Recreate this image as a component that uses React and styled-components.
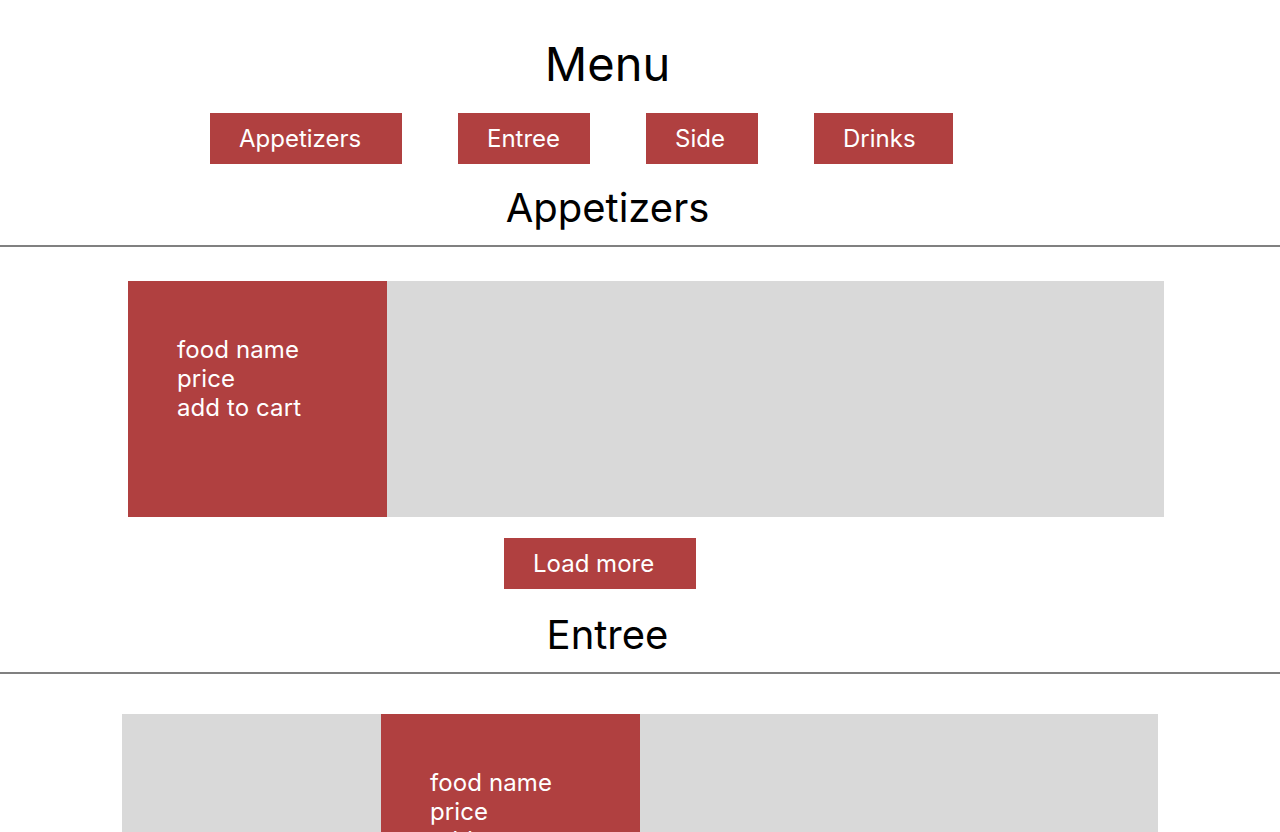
import styled, { createGlobalStyle } from 'styled-components';

const GlobalStyle = createGlobalStyle`
    body {
        margin: 0;
        font-family: Inter, "Noto Sans", sans-serif;
        background: #fff;
        color: #000;
        overflow: hidden;
    }
`

const Page = styled.div`
    width: 1280px;
    height: 832px;
    overflow: hidden;
`

const Title = styled.h1`
    margin: 0;
    padding-top: 35px;
    width: 1215px;
    height: 57px;
    text-align: center;
    font-size: 47px;
    font-weight: 400;
    line-height: 57px;
`

const Nav = styled.div`
    display: flex;
    gap: 56px;
    margin-top: 21px;
    padding-left: 210px;
`

const RedButton = styled.button`
    width: ${props => props.$w}px;
    height: 51px;
    padding: 0 0 0 29px;
    border: none;
    background: #b04040;
    color: #fff;
    font-family: inherit;
    font-size: 24px;
    line-height: 29px;
    text-align: left;
    cursor: pointer;
`

const SectionTitle = styled.h2`
    margin: ${props => props.$top}px 0 0;
    width: 1215px;
    text-align: center;
    font-size: 40px;
    font-weight: 400;
    line-height: normal;
`

const Divider = styled.hr`
    margin: ${props => props.$top}px 0 0;
    border: none;
    height: 2px;
    background: #808080;
`

const Row = styled.div`
    display: grid;
    grid-template-columns: repeat(4, 259px);
    width: 1036px;
    height: 236px;
    margin: ${props => props.$top}px 0 0 ${props => props.$left}px;
    background: #d9d9d9;
`

const Cell = styled.div`
    background: ${props => props.$active ? '#b04040' : '#d9d9d9'};
    color: #fff;
    padding: 54px 49px 0;
    font-size: 24px;
    line-height: 29px;
    letter-spacing: 0.1px;
`

const LoadWrap = styled.div`
    margin: 21px 0 0 504px;
`

function FoodRow({ active, top, left }) {
    return (
        <Row $top={top} $left={left}>
            {[0, 1, 2, 3].map(i => (
                <Cell key={i} $active={i === active}>
                    {i === active && <>
                        <div>food name</div>
                        <div>price</div>
                        <div>add to cart</div>
                    </>}
                </Cell>
            ))}
        </Row>
    )
}

export default function App() {
    const tabs = [
        { label: 'Appetizers', w: 192 },
        { label: 'Entree', w: 132 },
        { label: 'Side', w: 112 },
        { label: 'Drinks', w: 139 },
    ]

    return (
        <Page>
            <GlobalStyle />
            <Title>Menu</Title>
            <Nav>
                {tabs.map(t => <RedButton key={t.label} $w={t.w}>{t.label}</RedButton>)}
            </Nav>

            <SectionTitle $top={19}>Appetizers</SectionTitle>
            <Divider $top={13} />
            <FoodRow active={0} top={34} left={128} />
            <LoadWrap>
                <RedButton $w={192}>Load more</RedButton>
            </LoadWrap>

            <SectionTitle $top={21}>Entree</SectionTitle>
            <Divider $top={13} />
            <FoodRow active={1} top={40} left={122} />
        </Page>
    )
}
